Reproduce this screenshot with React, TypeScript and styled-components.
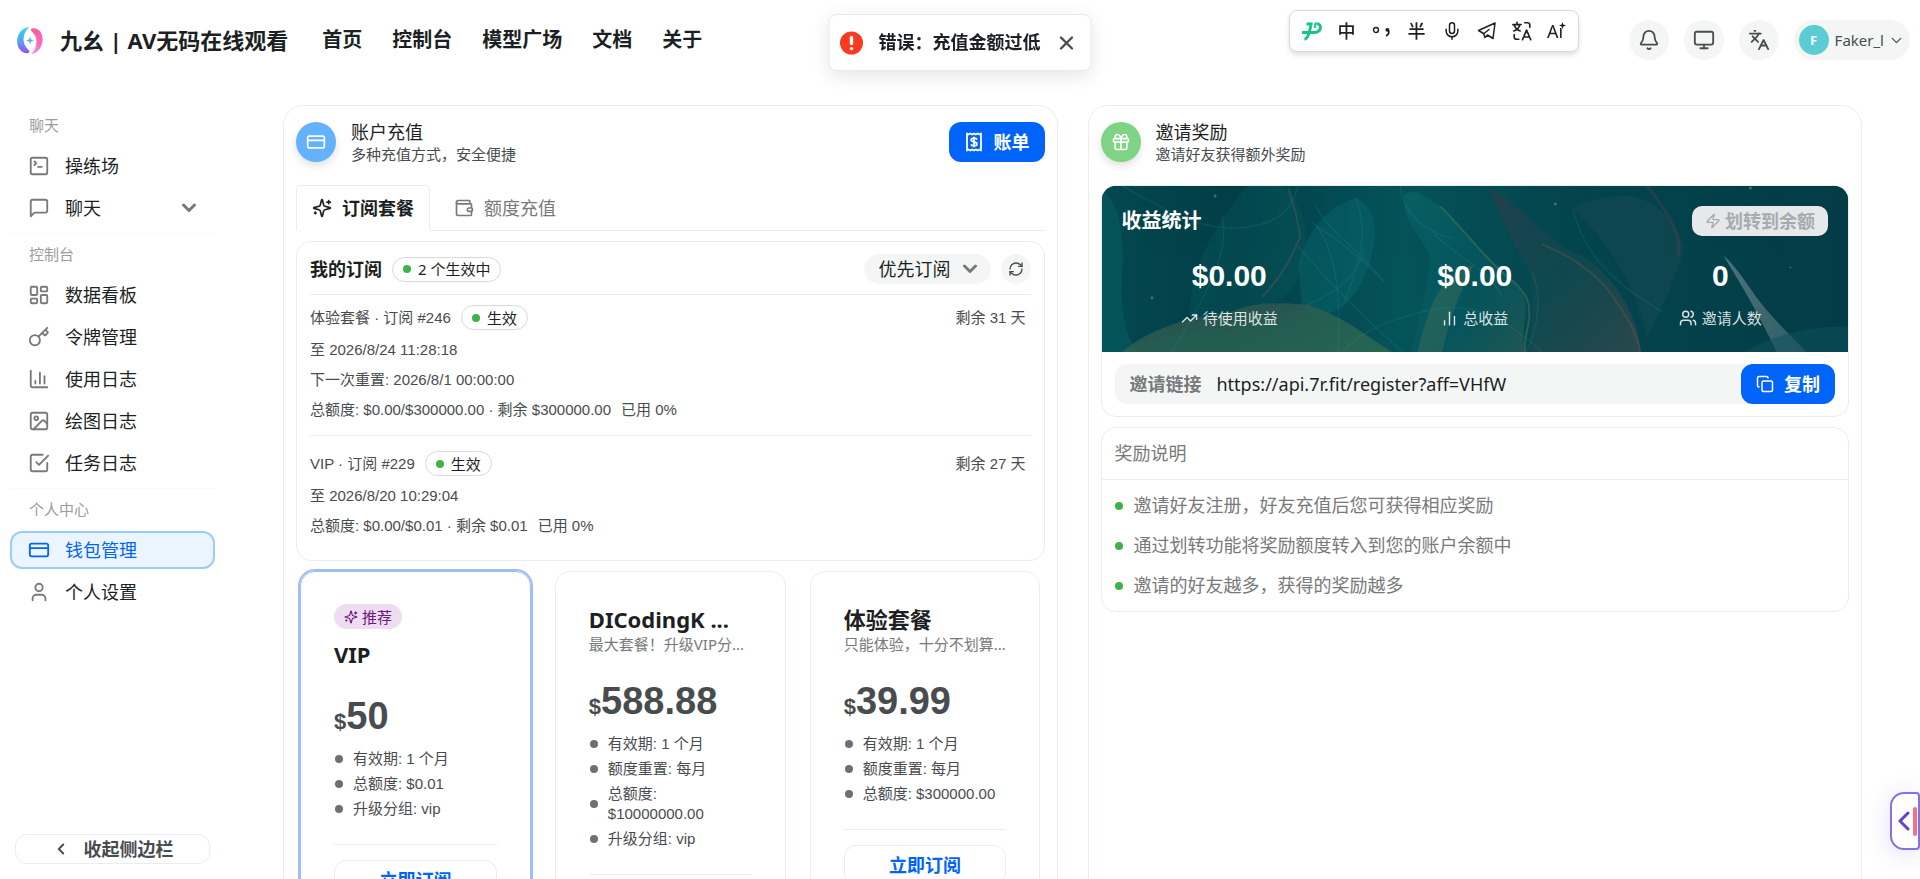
import React from 'react';
import styled, { createGlobalStyle, css } from 'styled-components';
import {
  Bell,
  ChartColumn,
  ChartNoAxesColumn,
  ChevronDown,
  Copy,
  CreditCard,
  Gift,
  Image as ImageIcon,
  Key,
  Languages,
  LayoutDashboard,
  Mic,
  Monitor,
  RefreshCw,
  SquareTerminal,
  TrendingUp,
  User,
  Users,
  Wallet,
  X,
  Zap,
} from 'lucide-react';

const color = {
  text: '#1c1f23',
  text1: '#494c4f',
  text2: '#77797b',
  text3: '#9a9c9e',
  line: '#ebecec',
  fill: '#f4f6f6',
  primary: '#0064fa',
  green: '#3bb346',
};

const sans = `"Noto Sans", "Noto Sans CJK SC", sans-serif`;
const arial = `"Liberation Sans", "Noto Sans CJK SC", sans-serif`;

const GlobalStyle = createGlobalStyle`
  *, *::before, *::after { box-sizing: border-box; }
  body { margin: 0; background: #fff; color: ${color.text}; font-family: ${sans}; font-size: 18px; line-height: 25px; }
  h1, h2, h3, p, ul, dl, dd, dt { margin: 0; padding: 0; font-size: inherit; font-weight: inherit; }
  ul { list-style: none; }
  a { color: inherit; text-decoration: none; }
  button, input, select { font: inherit; color: inherit; margin: 0; border: 0; background: none; padding: 0; }
  button { cursor: pointer; }
  svg { display: block; flex: none; }
`;

/* ---------- shell ---------- */

const Shell = styled.div`
  height: 100vh;
  display: flex;
  flex-direction: column;
  overflow: hidden;
`;

const Body = styled.div`
  flex: 1;
  min-height: 0;
  display: flex;
`;

const Main = styled.main`
  flex: 1;
  min-width: 0;
  overflow-y: auto;
  scrollbar-width: none;
  padding: 25px 58px;
`;

const Columns = styled.div`
  display: grid;
  grid-template-columns: repeat(2, minmax(0, 1fr));
  gap: 30px;
`;

/* ---------- header ---------- */

const Header = styled.header`
  height: 80px;
  flex: none;
  display: flex;
  align-items: center;
  justify-content: space-between;
  padding: 0 10px 0 15px;
`;

const BrandArea = styled.div`
  display: flex;
  align-items: center;
  gap: 34px;
`;

const Actions = styled.div`
  display: flex;
  align-items: center;
  gap: 15px;
`;

const Brand = styled.a`
  display: flex;
  align-items: center;
  gap: 15px;
  font-size: 22px;
  font-weight: 700;
  line-height: 30px;
  white-space: nowrap;
`;

const Nav = styled.nav`
  display: flex;
  gap: 30px;
  font-size: 20px;
  font-weight: 700;
  line-height: 30px;
  white-space: nowrap;
`;

const RoundButton = styled.button<{ $size: number }>`
  width: ${(p) => p.$size}px;
  height: ${(p) => p.$size}px;
  border-radius: 50%;
  background: ${color.fill};
  color: ${color.text1};
  display: flex;
  align-items: center;
  justify-content: center;
`;

const UserButton = styled.button`
  height: 40px;
  padding: 0 5px;
  border-radius: 20px;
  background: ${color.fill};
  color: ${color.text1};
  display: flex;
  align-items: center;
  font-size: 15px;
  line-height: 20px;
`;

const Avatar = styled.span`
  width: 30px;
  height: 30px;
  margin-right: 6px;
  border-radius: 50%;
  background: #5accd3;
  color: #fff;
  font-size: 13px;
  font-weight: 700;
  line-height: 30px;
`;

const UserName = styled.span`
  margin-right: 4px;
`;

/* ---------- sidebar ---------- */

const Sidebar = styled.aside`
  width: 225px;
  flex: none;
  display: flex;
  flex-direction: column;
  padding: 30px 10px 15px;
`;

const MenuSection = styled.section`
  & + & {
    margin-top: 6px;
    padding-top: 5px;
    border-top: 1px solid #f8f8f8;
  }
`;

const MenuLabel = styled.h2`
  padding: 0 19px;
  margin-bottom: 7px;
  color: ${color.text3};
  font-size: 15px;
  line-height: 30px;
`;

const MenuList = styled.ul`
  display: grid;
  gap: 4px;
`;

const MenuLink = styled.a<{ $active?: boolean }>`
  height: 38px;
  display: flex;
  align-items: center;
  gap: 15px;
  padding: 0 16px;
  border: 2px solid transparent;
  border-radius: 12px;
  line-height: 30px;
  svg {
    color: ${color.text2};
  }
  ${(p) =>
    p.$active &&
    css`
      color: ${color.primary};
      background: #eaf5ff;
      border-color: #98cdfd;
      svg {
        color: ${color.primary};
      }
    `}
`;

const MenuText = styled.span`
  flex: 1;
`;

const CollapseButton = styled.button`
  height: 30px;
  margin: auto 5px 0;
  border: 1px solid ${color.line};
  border-radius: 12px;
  display: flex;
  align-items: center;
  justify-content: center;
  gap: 14px;
  color: ${color.text1};
  font-weight: 700;
`;

/* ---------- cards ---------- */

const Card = styled.section`
  border: 1px solid ${color.line};
  border-radius: 20px;
  padding: 16px 12px 24px;
`;

const CardHead = styled.div`
  display: flex;
  align-items: center;
  gap: 15px;
  height: 40px;
  margin-bottom: 23px;
`;

const CardBadge = styled.span<{ $bg: string }>`
  width: 40px;
  height: 40px;
  border-radius: 50%;
  background: ${(p) => p.$bg};
  color: #fff;
  display: flex;
  align-items: center;
  justify-content: center;
  box-shadow: 0 4px 8px rgba(0, 0, 0, 0.12);
`;

const CardTitles = styled.div`
  flex: 1;
`;

const CardTitle = styled.h2`
  font-size: 18px;
  line-height: 24px;
`;

const CardSub = styled.p`
  color: ${color.text1};
  font-size: 15px;
  line-height: 20px;
`;

const PrimaryButton = styled.button`
  height: 40px;
  padding: 0 15px;
  border-radius: 12px;
  background: ${color.primary};
  color: #fff;
  display: flex;
  align-items: center;
  gap: 10px;
  font-weight: 700;
  white-space: nowrap;
`;

const Tabs = styled.div`
  display: flex;
  gap: 8px;
  border-bottom: 1px solid ${color.line};
  margin-bottom: 10px;
`;

const Tab = styled.button<{ $active?: boolean }>`
  height: 46px;
  margin-bottom: -1px;
  padding: 0 15px;
  display: flex;
  align-items: center;
  gap: 10px;
  border: 1px solid ${(p) => (p.$active ? color.line : 'transparent')};
  border-bottom-color: ${(p) => (p.$active ? '#fff' : 'transparent')};
  border-radius: 5px 5px 0 0;
  color: ${(p) => (p.$active ? color.text : color.text2)};
  font-weight: ${(p) => (p.$active ? 700 : 400)};
`;

const Panel = styled.div`
  border: 1px solid ${color.line};
  border-radius: 15px;
  overflow: hidden;
`;

const SubsPanel = styled(Panel)`
  padding: 12px 13px 24px;
`;

const SubsHead = styled.div`
  display: flex;
  align-items: center;
  gap: 10px;
  height: 41px;
  padding-bottom: 10px;
  border-bottom: 1px solid ${color.line};
`;

const SubsTitle = styled.h3`
  font-weight: 700;
`;

const Tag = styled.span`
  height: 25px;
  padding: 0 10px;
  border: 1px solid #d8dadb;
  border-radius: 13px;
  display: inline-flex;
  align-items: center;
  gap: 7px;
  color: ${color.text};
  font-family: ${sans};
  font-size: 15px;
  line-height: 20px;
`;

const Dot = styled.i<{ $color?: string }>`
  width: 8px;
  height: 8px;
  flex: none;
  border-radius: 50%;
  background: ${(p) => p.$color ?? color.green};
`;

const SelectPill = styled.label`
  height: 30px;
  margin-left: auto;
  padding: 0 13px 0 15px;
  border-radius: 15px;
  background: ${color.fill};
  display: flex;
  align-items: center;
  gap: 11px;
  svg {
    color: ${color.text2};
  }
`;

const Select = styled.select`
  appearance: none;
  width: 72px;
  outline: none;
  line-height: 30px;
`;

const SubEntry = styled.article`
  display: grid;
  gap: 10px;
  padding: 10px 5px 15px 0;
  color: ${color.text1};
  font-family: ${arial};
  font-size: 15px;
  line-height: 20px;
  & + & {
    border-top: 1px solid ${color.line};
    padding: 15px 5px 0 0;
  }
`;

const EntryHead = styled.div`
  display: flex;
  align-items: center;
  gap: 10px;
`;

const Remaining = styled.span`
  margin-left: auto;
`;

const QuotaLine = styled.p`
  display: flex;
  gap: 10px;
`;

/* ---------- plans ---------- */

const Plans = styled.div`
  display: grid;
  grid-template-columns: repeat(3, minmax(0, 1fr));
  gap: 24px;
  padding: 10px 4px 0;
`;

const PlanCard = styled.article<{ $featured?: boolean }>`
  min-height: 380px;
  padding: 32px 33px 24px;
  border: 1px solid ${(p) => (p.$featured ? '#9dbefb' : color.line)};
  border-radius: 15px;
  box-shadow: ${(p) => (p.$featured ? '0 0 0 2px #9dbefb' : 'none')};
`;

const Ribbon = styled.span`
  height: 25px;
  width: fit-content;
  margin-bottom: 10px;
  padding: 0 10px;
  border-radius: 13px;
  background: #eedcf1;
  color: #6b1a80;
  display: flex;
  align-items: center;
  gap: 4px;
  font-size: 15px;
  line-height: 20px;
`;

const PlanName = styled.h3`
  font-size: 22px;
  font-weight: 700;
  line-height: 30px;
  white-space: nowrap;
`;

const PlanNote = styled.p`
  color: ${color.text2};
  font-size: 15px;
  line-height: 20px;
  white-space: nowrap;
`;

const Price = styled.p`
  margin: 22px 0 8px;
  color: ${color.text1};
  font-family: ${arial};
  font-size: 38px;
  font-weight: 700;
  line-height: 50px;
`;

const Currency = styled.span`
  font-size: 22px;
  line-height: 24px;
`;

const Features = styled.ul`
  display: grid;
  gap: 5px;
  padding-bottom: 25px;
  margin-bottom: 15px;
  border-bottom: 1px solid ${color.line};
  color: ${color.text1};
  font-family: ${arial};
  font-size: 15px;
  line-height: 20px;
`;

const Feature = styled.li`
  display: flex;
  align-items: center;
  gap: 10px;
  padding-left: 1px;
`;

const OutlineButton = styled.button`
  width: 100%;
  height: 40px;
  border: 1px solid ${color.line};
  border-radius: 12px;
  color: ${color.primary};
  font-weight: 700;
`;

/* ---------- invite ---------- */

const Banner = styled.div`
  position: relative;
  overflow: hidden;
  padding: 20px 20px 24px;
  background: #03464e;
  color: #fff;
`;

const BannerArt = styled.svg`
  position: absolute;
  inset: 0;
  width: 100%;
  height: 100%;
`;

const BannerHead = styled.div`
  position: relative;
  display: flex;
  align-items: center;
  justify-content: space-between;
  margin-bottom: 20px;
`;

const BannerTitle = styled.h3`
  font-size: 20px;
  font-weight: 700;
  line-height: 30px;
`;

const TransferButton = styled.button`
  height: 30px;
  padding: 0 13px;
  border-radius: 10px;
  background: #e6e8ea;
  color: #a7abb0;
  display: flex;
  align-items: center;
  gap: 4px;
  font-weight: 700;
`;

const Stats = styled.dl`
  position: relative;
  display: grid;
  grid-template-columns: repeat(3, 1fr);
  gap: 30px;
`;

const Stat = styled.div`
  display: flex;
  flex-direction: column-reverse;
  align-items: center;
  gap: 12px;
`;

const StatValue = styled.dd`
  font-family: ${arial};
  font-size: 30px;
  font-weight: 700;
  line-height: 40px;
`;

const StatLabel = styled.dt`
  display: flex;
  align-items: center;
  gap: 5px;
  color: rgba(255, 255, 255, 0.85);
  font-size: 15px;
  line-height: 20px;
`;

const InvitePanel = styled(Panel)`
  margin-bottom: 10px;
`;

const LinkRow = styled.div`
  height: 40px;
  margin: 12px 13px;
  border-radius: 12px;
  background: ${color.fill};
  display: flex;
  align-items: center;
`;

const LinkLabel = styled.label`
  padding: 0 15px;
  color: ${color.text2};
  font-weight: 700;
`;

const LinkInput = styled.input`
  flex: 1;
  min-width: 0;
  outline: none;
`;

const RulesHead = styled.h3`
  padding: 13px;
  border-bottom: 1px solid ${color.line};
  color: ${color.text2};
`;

const Rules = styled.ul`
  display: grid;
  gap: 15px;
  padding: 13px;
  color: ${color.text2};
`;

const Rule = styled.li`
  display: flex;
  align-items: center;
  gap: 11px;
`;

/* ---------- floating layers ---------- */

const Toast = styled.div`
  position: fixed;
  top: 14px;
  left: 50%;
  transform: translateX(-50%);
  height: 57px;
  padding: 0 13px 0 10px;
  border: 1px solid #e8e9e9;
  border-radius: 8px;
  background: #fff;
  box-shadow: 0 5px 18px rgba(0, 0, 0, 0.1);
  display: flex;
  align-items: center;
  font-weight: 700;
  white-space: nowrap;
`;

const ToastText = styled.span`
  margin: 0 15px;
`;

const ImeBar = styled.div`
  position: fixed;
  top: 10px;
  right: 341px;
  height: 42px;
  padding: 0 4px;
  border: 1px solid #d9d9d9;
  border-radius: 8px;
  background: #fff;
  box-shadow: 0 3px 5px rgba(0, 0, 0, 0.12);
  display: flex;
  align-items: center;
  color: #202020;
`;

const ImeKey = styled.button`
  width: 35px;
  height: 30px;
  display: flex;
  align-items: center;
  justify-content: center;
  font-weight: 500;
`;

const SideHandle = styled.button`
  position: fixed;
  right: 0;
  bottom: 29px;
  width: 30px;
  height: 58px;
  padding: 0 1px 0 6px;
  border: 2px solid #8a70de;
  border-radius: 14px 4px 4px 14px;
  background: #fff;
  box-shadow: 0 4px 24px rgba(120, 110, 240, 0.22);
  display: flex;
  align-items: center;
  justify-content: space-between;
`;

const HandleBar = styled.i`
  width: 4px;
  height: 29px;
  border-radius: 2px;
  background: #f5708c;
`;

/* ---------- drawings ---------- */

type GlyphProps = { size: number; width?: number; children: React.ReactNode };

const Glyph = ({ size, width = 2, children }: GlyphProps) => (
  <svg
    width={size}
    height={size}
    viewBox="0 0 24 24"
    fill="none"
    stroke="currentColor"
    strokeWidth={width}
    strokeLinecap="round"
    strokeLinejoin="round"
    aria-hidden="true"
  >
    {children}
  </svg>
);

const SparklesIcon = ({ size }: { size: number }) => (
  <Glyph size={size}>
    <path d="M9.937 15.5A2 2 0 0 0 8.5 14.063l-6.135-1.582a.5.5 0 0 1 0-.962L8.5 9.936A2 2 0 0 0 9.937 8.5l1.582-6.135a.5.5 0 0 1 .963 0L14.063 8.5A2 2 0 0 0 15.5 9.937l6.135 1.581a.5.5 0 0 1 0 .964L15.5 14.063a2 2 0 0 0-1.437 1.437l-1.582 6.135a.5.5 0 0 1-.963 0z" />
    <path d="M20 3v4M22 5h-4M4 17v2M5 18H3" />
  </Glyph>
);

const MessageIcon = () => (
  <Glyph size={22}>
    <path d="M21 15a2 2 0 0 1-2 2H7l-4 4V5a2 2 0 0 1 2-2h14a2 2 0 0 1 2 2z" />
  </Glyph>
);

const TaskIcon = () => (
  <Glyph size={22}>
    <path d="m9 11 3 3L22 4" />
    <path d="M21 12v7a2 2 0 0 1-2 2H5a2 2 0 0 1-2-2V5a2 2 0 0 1 2-2h11" />
  </Glyph>
);

const BoldChevron = () => (
  <svg width="16" height="10" viewBox="0 0 16 10" fill="none" stroke="currentColor" strokeWidth="3" strokeLinecap="round" strokeLinejoin="round" aria-hidden="true">
    <path d="m2.500 2 5.500 5.500L13.500 2" />
  </svg>
);

const ReceiptIcon = () => (
  <svg width="20" height="20" viewBox="0 0 20 20" fill="none" stroke="currentColor" strokeWidth="1.800" strokeLinejoin="round" aria-hidden="true">
    <path d="M3 1.500 4.500 2.500 6.300 1.500 8.200 2.500 10 1.500 11.800 2.500 13.700 1.500 15.500 2.500 17 1.500V18.500L15.500 17.500 13.700 18.500 11.800 17.500 10 18.500 8.200 17.500 6.300 18.500 4.500 17.500 3 18.500Z" />
    <path d="M13 7.600C12.500 6.500 11.300 6.200 10 6.200 8.400 6.200 7.200 6.900 7.200 8.100 7.200 10.800 13 9.200 13 12 13 13.200 11.700 13.900 10 13.900 8.500 13.900 7.400 13.300 7 12.300M10 4.800V15.300" />
  </svg>
);

const LogoIcon = () => (
  <svg width="30" height="30" viewBox="0 0 30 30" aria-hidden="true">
    <defs>
      <linearGradient id="logoLeft" x1="0" y1="0" x2="0" y2="1">
        <stop offset="0" stopColor="#22e3f2" />
        <stop offset="0.550" stopColor="#5b9df8" />
        <stop offset="1" stopColor="#9b4dfa" />
      </linearGradient>
      <linearGradient id="logoRight" x1="0" y1="0" x2="0" y2="1">
        <stop offset="0" stopColor="#fb5a9f" />
        <stop offset="0.600" stopColor="#fd6bbd" />
        <stop offset="1" stopColor="#ee8cf6" />
      </linearGradient>
    </defs>
    <path d="M14.500 2C6.500 3 2.200 9 2.200 16.500 2.200 24 7.500 28.500 12.800 28.200 14.800 28 14.800 26.500 13.500 25 10.500 21.800 8.300 18.500 8.600 13.500 8.900 8.500 11 4.800 14.500 2Z" fill="url(#logoLeft)" />
    <path d="M17 3.500C23.500 2.300 27.600 8 27.600 14.500 27.600 22 23 27.800 16 29.300 19.800 26 21.400 21.500 21.500 16.500 21.600 11.500 19 8.500 16.600 6.200 15.500 5.200 15.600 3.900 17 3.500Z" fill="url(#logoRight)" />
    <path d="M15 11.500 15.900 14.600 19 15.500 15.900 16.400 15 19.500 14.100 16.400 11 15.500 14.100 14.600Z" fill="#4fb0fb" />
  </svg>
);

const ErrorIcon = () => (
  <svg width="24" height="24" viewBox="0 0 24 24" aria-hidden="true">
    <circle cx="12" cy="12" r="11.500" fill="#f93920" />
    <path d="M12 6.500V12.500" stroke="#fff" strokeWidth="3.400" strokeLinecap="round" />
    <circle cx="12" cy="17.600" r="1.700" fill="#fff" />
  </svg>
);

const ImeLogo = () => (
  <svg width="22" height="20" viewBox="0 0 22 20" fill="none" stroke="#17c389" strokeWidth="3" aria-hidden="true">
    <path d="M10.500 1.500 8.500 10.500C7.500 14.500 6.500 17.500 3.500 18.300" />
    <path d="M5.500 3H9M1 11.500H13.500C20.500 11.200 21.500 3 15.500 2.500" />
    <path d="M14.800 1.500 13.600 7" strokeWidth="2" />
  </svg>
);

const PunctuationIcon = () => (
  <svg width="20" height="20" viewBox="0 0 20 20" fill="none" stroke="currentColor" aria-hidden="true">
    <circle cx="4" cy="9" r="2.500" strokeWidth="1.400" />
    <path d="M15.500 8.200C18 10 17 13.500 14 15" strokeWidth="1.800" />
    <circle cx="15.300" cy="8.800" r="1.900" fill="currentColor" stroke="none" />
  </svg>
);

const PlaneIcon = () => (
  <svg width="20" height="20" viewBox="0 0 20 20" fill="none" stroke="currentColor" strokeWidth="1.500" strokeLinejoin="round" strokeLinecap="round" aria-hidden="true">
    <path d="M18 2 1.500 9.500 6.500 12.500 8 16.500 10.500 14 16 17.500Z" />
    <path d="M7 12.500 12 8.500" />
  </svg>
);

const AiIcon = styled.span`
  position: relative;
  padding-right: 3px;
  font-size: 18px;
  font-weight: 400;
`;

const AiStar = styled.svg`
  position: absolute;
  top: 3px;
  right: 0;
`;

const InviteArt = () => (
  <BannerArt viewBox="0 0 746 165" preserveAspectRatio="none" aria-hidden="true">
    <defs>
      <linearGradient id="artBase" x1="0" y1="0" x2="1" y2="0">
        <stop offset="0" stopColor="#04484f" />
        <stop offset="0.180" stopColor="#033e47" />
        <stop offset="0.400" stopColor="#05535a" />
        <stop offset="0.620" stopColor="#04454e" />
        <stop offset="1" stopColor="#033c46" />
      </linearGradient>
      <linearGradient id="artPetal" x1="0" y1="0" x2="1" y2="1">
        <stop offset="0" stopColor="#0a6468" stopOpacity="0.900" />
        <stop offset="0.600" stopColor="#065d65" stopOpacity="0.500" />
        <stop offset="1" stopColor="#2c5c54" stopOpacity="0.900" />
      </linearGradient>
      <linearGradient id="artRust" x1="0" y1="0" x2="1" y2="1">
        <stop offset="0" stopColor="#34394a" stopOpacity="0.800" />
        <stop offset="0.500" stopColor="#1d4a50" stopOpacity="0.600" />
        <stop offset="1" stopColor="#3c4a4b" stopOpacity="0.900" />
      </linearGradient>
      <linearGradient id="artDome" x1="0" y1="0" x2="1" y2="1">
        <stop offset="0" stopColor="#46524a" stopOpacity="0.600" />
        <stop offset="0.500" stopColor="#2f6354" stopOpacity="0.900" />
        <stop offset="1" stopColor="#2f6c50" stopOpacity="0.900" />
      </linearGradient>
      <linearGradient id="artSpike" x1="0" y1="0" x2="1" y2="1">
        <stop offset="0" stopColor="#6d8890" stopOpacity="0.700" />
        <stop offset="1" stopColor="#436a72" stopOpacity="0.700" />
      </linearGradient>
    </defs>
    <rect width="746" height="165" fill="url(#artBase)" />
    <path d="M0 5C22 20 22 60 20 90 18 125 24 145 34 165H0Z" fill="#07616a" opacity="0.450" />
    <path d="M182 0C205 22 210 55 196 90 185 120 150 130 88 130 85 90 110 40 145 0Z" fill="#0a5a5f" opacity="0.350" />
    <path d="M186 2C192 20 196 34 198 50 190 70 180 90 160 110" fill="none" stroke="#6a6250" strokeWidth="2" opacity="0.350" />
    <path d="M196 78C205 45 225 20 254 12 275 22 280 50 262 90 250 120 220 140 200 120Z" fill="#087076" opacity="0.350" />
    <path d="M302 8 314 5 338 20C360 42 378 66 400 84 420 98 427 115 422 135 420 150 422 160 422 165H310C316 130 326 100 328 72 322 50 300 40 302 8Z" fill="url(#artPetal)" opacity="0.800" />
    <path d="M338 20C362 44 380 68 402 88 424 104 430 115 426 138 423 150 422 158 423 165" fill="none" stroke="#6c8a52" strokeWidth="2" opacity="0.350" />
    <path d="M385 0C398 30 412 60 426 82 432 100 432 130 426 165H538C535 120 505 85 480 70 450 58 436 38 410 18 402 10 394 6 385 0Z" fill="url(#artRust)" opacity="0.750" />
    <path d="M440 58C470 70 500 90 516 118 530 138 536 152 538 165" fill="none" stroke="#7a5a44" strokeWidth="2" opacity="0.350" />
    <path d="M470 22C520 0 560 5 582 60 575 90 560 120 545 150 535 110 520 70 470 22Z" fill="#174a52" opacity="0.500" />
    <path d="M545 0C568 30 580 50 576 70" fill="none" stroke="#4e4452" strokeWidth="3" opacity="0.400" />
    <path d="M20 165C50 140 90 130 130 125 150 116 175 115 205 118 240 128 265 150 290 165Z" fill="url(#artDome)" opacity="0.850" />
    <path d="M315 165C330 110 338 90 372 78 355 110 345 140 340 165Z" fill="#5c7a56" opacity="0.300" />
    <g fill="none" stroke="#2aa3a3" strokeWidth="1" opacity="0.200">
      <path d="M210 35C230 55 240 95 236 165" />
      <path d="M214 40C250 60 275 90 282 95 255 60 225 45 214 20" />
      <path d="M196 60C230 100 262 130 300 165" />
      <path d="M262 62C255 95 225 110 205 118" />
      <path d="M298 0C300 25 320 45 350 52" />
      <path d="M254 12C262 40 266 60 240 120" />
      <path d="M330 45C350 70 380 75 400 110" />
      <path d="M20 0C60 20 100 50 150 40 180 35 190 20 196 0" />
      <path d="M430 85C440 110 436 140 424 165" />
      <path d="M470 22C480 60 500 90 560 125" />
      <path d="M240 165C262 140 300 130 320 125 380 110 410 140 440 165" />
      <path d="M120 30C128 60 110 100 70 165" />
    </g>
    <path d="M621 69C632 78 643 95 655 112 672 134 690 150 704 165H674C658 130 640 100 621 69Z" fill="url(#artSpike)" />
    <path d="M746 140C715 138 680 145 640 165H746Z" fill="#0b515b" opacity="0.500" />
    <g fill="#9ab5a8" opacity="0.400">
      <circle cx="113" cy="10" r="1.500" />
      <circle cx="453" cy="18" r="1.500" />
      <circle cx="648" cy="2" r="1.500" />
      <circle cx="50" cy="111" r="1.500" />
      <circle cx="688" cy="81" r="1" />
      <circle cx="610" cy="45" r="1" />
    </g>
  </BannerArt>
);

/* ---------- data ---------- */

const navItems = ['首页', '控制台', '模型广场', '文档', '关于'];

const menu = [
  {
    label: '聊天',
    items: [
      { text: '操练场', icon: <SquareTerminal size={22} /> },
      { text: '聊天', icon: <MessageIcon />, expandable: true },
    ],
  },
  {
    label: '控制台',
    items: [
      { text: '数据看板', icon: <LayoutDashboard size={22} /> },
      { text: '令牌管理', icon: <Key size={22} /> },
      { text: '使用日志', icon: <ChartColumn size={22} /> },
      { text: '绘图日志', icon: <ImageIcon size={22} /> },
      { text: '任务日志', icon: <TaskIcon /> },
    ],
  },
  {
    label: '个人中心',
    items: [
      { text: '钱包管理', icon: <CreditCard size={22} />, active: true },
      { text: '个人设置', icon: <User size={22} /> },
    ],
  },
] as { label: string; items: { text: string; icon: React.ReactNode; expandable?: boolean; active?: boolean }[] }[];

const subscriptions = [
  {
    name: '体验套餐 · 订阅 #246',
    left: '剩余 31 天',
    lines: ['至 2026/8/24 11:28:18', '下一次重置: 2026/8/1 00:00:00'],
    quota: '总额度: $0.00/$300000.00 · 剩余 $300000.00',
  },
  {
    name: 'VIP · 订阅 #229',
    left: '剩余 27 天',
    lines: ['至 2026/8/20 10:29:04'],
    quota: '总额度: $0.00/$0.01 · 剩余 $0.01',
  },
];

const plans = [
  {
    name: 'VIP',
    price: '50',
    featured: true,
    features: ['有效期: 1 个月', '总额度: $0.01', '升级分组: vip'],
  },
  {
    name: 'DICodingK ...',
    note: '最大套餐！升级VIP分...',
    price: '588.88',
    features: ['有效期: 1 个月', '额度重置: 每月', '总额度: $10000000.00', '升级分组: vip'],
  },
  {
    name: '体验套餐',
    note: '只能体验，十分不划算...',
    price: '39.99',
    features: ['有效期: 1 个月', '额度重置: 每月', '总额度: $300000.00'],
  },
] as { name: string; note?: string; price: string; featured?: boolean; features: string[] }[];

const stats = [
  { value: '$0.00', label: '待使用收益', icon: <TrendingUp size={17} /> },
  { value: '$0.00', label: '总收益', icon: <ChartNoAxesColumn size={17} /> },
  { value: '0', label: '邀请人数', icon: <Users size={18} /> },
];

const rules = [
  '邀请好友注册，好友充值后您可获得相应奖励',
  '通过划转功能将奖励额度转入到您的账户余额中',
  '邀请的好友越多，获得的奖励越多',
];

/* ---------- page ---------- */

const TopBar = () => (
  <Header>
    <BrandArea>
      <Brand href="#">
        <LogoIcon />
        <span>九幺 | AV无码在线观看</span>
      </Brand>
      <Nav>
        {navItems.map((item) => (
          <a href="#" key={item}>
            {item}
          </a>
        ))}
      </Nav>
    </BrandArea>
    <Actions>
      <RoundButton $size={40} aria-label="通知">
        <Bell size={22} />
      </RoundButton>
      <RoundButton $size={40} aria-label="主题">
        <Monitor size={22} />
      </RoundButton>
      <RoundButton $size={40} aria-label="语言">
        <Languages size={22} />
      </RoundButton>
      <UserButton>
        <Avatar>F</Avatar>
        <UserName>Faker_l</UserName>
        <ChevronDown size={17} strokeWidth={1.8} />
      </UserButton>
    </Actions>
  </Header>
);

const SideMenu = () => (
  <Sidebar>
    {menu.map((section) => (
      <MenuSection key={section.label}>
        <MenuLabel>{section.label}</MenuLabel>
        <MenuList>
          {section.items.map((item) => (
            <li key={item.text}>
              <MenuLink href="#" $active={item.active}>
                {item.icon}
                <MenuText>{item.text}</MenuText>
                {item.expandable && <BoldChevron />}
              </MenuLink>
            </li>
          ))}
        </MenuList>
      </MenuSection>
    ))}
    <CollapseButton>
      <Glyph size={18} width={2.5}>
        <path d="m15 18-6-6 6-6" />
      </Glyph>
      收起侧边栏
    </CollapseButton>
  </Sidebar>
);

const TopUpCard = () => (
  <Card>
    <CardHead>
      <CardBadge $bg="#65b2fc">
        <CreditCard size={20} />
      </CardBadge>
      <CardTitles>
        <CardTitle>账户充值</CardTitle>
        <CardSub>多种充值方式，安全便捷</CardSub>
      </CardTitles>
      <PrimaryButton>
        <ReceiptIcon />
        账单
      </PrimaryButton>
    </CardHead>

    <Tabs role="tablist">
      <Tab role="tab" aria-selected="true" $active>
        <SparklesIcon size={20} />
        订阅套餐
      </Tab>
      <Tab role="tab" aria-selected="false">
        <Wallet size={20} />
        额度充值
      </Tab>
    </Tabs>

    <SubsPanel>
      <SubsHead>
        <SubsTitle>我的订阅</SubsTitle>
        <Tag>
          <Dot />2 个生效中
        </Tag>
        <SelectPill>
          <Select aria-label="扣费顺序" defaultValue="sub">
            <option value="sub">优先订阅</option>
          </Select>
          <BoldChevron />
        </SelectPill>
        <RoundButton $size={30} aria-label="刷新">
          <RefreshCw size={16} />
        </RoundButton>
      </SubsHead>
      {subscriptions.map((sub) => (
        <SubEntry key={sub.name}>
          <EntryHead>
            <span>{sub.name}</span>
            <Tag>
              <Dot />
              生效
            </Tag>
            <Remaining>{sub.left}</Remaining>
          </EntryHead>
          {sub.lines.map((line) => (
            <p key={line}>{line}</p>
          ))}
          <QuotaLine>
            <span>{sub.quota}</span>
            <span>已用 0%</span>
          </QuotaLine>
        </SubEntry>
      ))}
    </SubsPanel>

    <Plans>
      {plans.map((plan) => (
        <PlanCard key={plan.name} $featured={plan.featured}>
          {plan.featured && (
            <Ribbon>
              <SparklesIcon size={14} />
              推荐
            </Ribbon>
          )}
          <PlanName>{plan.name}</PlanName>
          {plan.note && <PlanNote>{plan.note}</PlanNote>}
          <Price>
            <Currency>$</Currency>
            {plan.price}
          </Price>
          <Features>
            {plan.features.map((feature) => (
              <Feature key={feature}>
                <Dot $color="#6b7075" />
                <span>{feature}</span>
              </Feature>
            ))}
          </Features>
          <OutlineButton>立即订阅</OutlineButton>
        </PlanCard>
      ))}
    </Plans>
  </Card>
);

const InviteCard = () => (
  <Card>
    <CardHead>
      <CardBadge $bg="#7ed384">
        <Gift size={20} />
      </CardBadge>
      <CardTitles>
        <CardTitle>邀请奖励</CardTitle>
        <CardSub>邀请好友获得额外奖励</CardSub>
      </CardTitles>
    </CardHead>

    <InvitePanel>
      <Banner>
        <InviteArt />
        <BannerHead>
          <BannerTitle>收益统计</BannerTitle>
          <TransferButton disabled>
            <Zap size={16} />
            划转到余额
          </TransferButton>
        </BannerHead>
        <Stats>
          {stats.map((stat) => (
            <Stat key={stat.label}>
              <StatLabel>
                {stat.icon}
                {stat.label}
              </StatLabel>
              <StatValue>{stat.value}</StatValue>
            </Stat>
          ))}
        </Stats>
      </Banner>
      <LinkRow>
        <LinkLabel htmlFor="invite-link">邀请链接</LinkLabel>
        <LinkInput id="invite-link" readOnly value="https://api.7r.fit/register?aff=VHfW" />
        <PrimaryButton>
          <Copy size={18} />
          复制
        </PrimaryButton>
      </LinkRow>
    </InvitePanel>

    <Panel>
      <RulesHead>奖励说明</RulesHead>
      <Rules>
        {rules.map((rule) => (
          <Rule key={rule}>
            <Dot />
            {rule}
          </Rule>
        ))}
      </Rules>
    </Panel>
  </Card>
);

const App = () => (
  <Shell>
    <GlobalStyle />
    <TopBar />
    <Body>
      <SideMenu />
      <Main>
        <Columns>
          <TopUpCard />
          <InviteCard />
        </Columns>
      </Main>
    </Body>

    <Toast role="alert">
      <ErrorIcon />
      <ToastText>错误：充值金额过低</ToastText>
      <button aria-label="关闭">
        <X size={22} color={color.text1} strokeWidth={2.5} />
      </button>
    </Toast>

    <ImeBar>
      <ImeKey aria-label="输入法">
        <ImeLogo />
      </ImeKey>
      <ImeKey>中</ImeKey>
      <ImeKey aria-label="标点">
        <PunctuationIcon />
      </ImeKey>
      <ImeKey>半</ImeKey>
      <ImeKey aria-label="语音">
        <Mic size={20} strokeWidth={1.8} />
      </ImeKey>
      <ImeKey aria-label="发送">
        <PlaneIcon />
      </ImeKey>
      <ImeKey aria-label="翻译">
        <Glyph size={22} width={1.8}>
          <path d="M2 5h9M6.500 2.500V5M3 12C6 11 9 8.500 9.500 5M3.500 5.500C4.500 9 7 11 10 12M15 3h3a2.500 2.500 0 0 1 2.500 2.500V8M8.500 21H6a2.500 2.500 0 0 1-2.500-2.500V16M12.500 21.500 17 11l4.500 10.500M14 18.500h6" />
        </Glyph>
      </ImeKey>
      <ImeKey aria-label="智能助手">
        <AiIcon>
          Aı
          <AiStar width="7" height="7" viewBox="0 0 7 7" aria-hidden="true">
            <path d="M3.500 0 4.400 2.600 7 3.500 4.400 4.400 3.500 7 2.600 4.400 0 3.500 2.600 2.600Z" fill="currentColor" />
          </AiStar>
        </AiIcon>
      </ImeKey>
    </ImeBar>

    <SideHandle aria-label="展开">
      <svg width="12" height="20" viewBox="0 0 12 20" fill="none" stroke="#6540c8" strokeWidth="3" strokeLinecap="round" strokeLinejoin="round" aria-hidden="true">
        <path d="M10 2 2 10l8 8" />
      </svg>
      <HandleBar />
    </SideHandle>
  </Shell>
);

export default App;
